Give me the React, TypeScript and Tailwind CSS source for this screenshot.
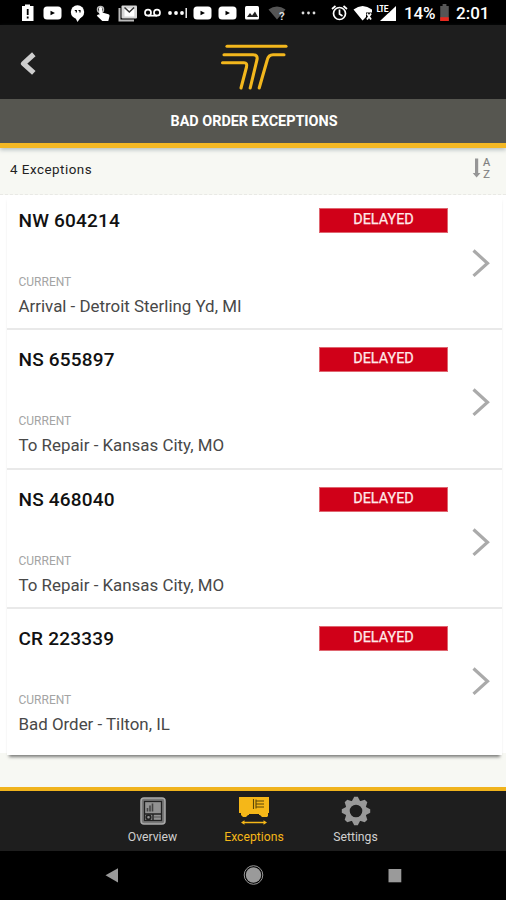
import React from "react";

type Item = { id: string; status: string; current: string; row: string };

const items: Item[] = [
  { id: "NW 604214", status: "DELAYED", current: "Arrival - Detroit Sterling Yd, MI", row: "h-[135px] pt-[13px]" },
  { id: "NS 655897", status: "DELAYED", current: "To Repair - Kansas City, MO", row: "h-[140px] pt-[17px]" },
  { id: "NS 468040", status: "DELAYED", current: "To Repair - Kansas City, MO", row: "h-[139px] pt-[17px]" },
  { id: "CR 223339", status: "DELAYED", current: "Bad Order - Tilton, IL", row: "h-[146px] pt-[17px]" },
];

function YoutubeGlyph({ x }: { x: number }) {
  return (
    <g transform={`translate(${x} 6.5)`}>
      <rect width="18" height="13" rx="3.5" fill="#fff" />
      <path d="M7 4.2 11.500 6.5 7 8.8Z" fill="#000" />
    </g>
  );
}

function StatusBar() {
  return (
    <div className="flex h-[25px] items-center bg-black text-white">
      <svg width="404" height="25" viewBox="0 0 404 25" className="shrink-0">
        <path d="M22 6h3V4.500h5V6h3.500v15H22Z" fill="#fff" />
        <path d="M27.700 9v6M27.700 16.500v2" stroke="#000" strokeWidth="1.800" />
        <YoutubeGlyph x={43.500} />
        <circle cx="77.500" cy="12" r="6.700" fill="#fff" />
        <path d="M75 17h6l-3.500 5Z" fill="#fff" />
        <path d="M74.800 10.500h1.500v2M78.500 10.500h1.500v2" stroke="#000" strokeWidth="1.200" fill="none" />
        <circle cx="100.500" cy="9.500" r="3" fill="none" stroke="#bbb" strokeWidth="1.500" />
        <path d="M99 8q1.500-2 3.200 0v4.500l6.300 1.700q1.500.5 1 2l-1.200 4.800h-6l-5.500-5.200 1.500-1.500 1 1Z" fill="#fff" />
        <path d="M119.500 8v12.500H134" stroke="#bbb" strokeWidth="2" fill="none" />
        <rect x="121.500" y="5.500" width="15.500" height="13" rx="1" fill="#d6d6d6" />
        <path d="M124.500 8.500h9.800v8h-9.800Z" fill="#fff" />
        <path d="M124.500 7.500l4.800 4.500 4.800-4.500" fill="none" stroke="#333" strokeWidth="1.500" />
        <g fill="none" stroke="#fff" strokeWidth="1.700">
          <circle cx="148" cy="12.700" r="3" />
          <circle cx="157" cy="12.700" r="3" />
          <path d="M148 15.700h9" />
        </g>
        <g fill="#fff">
          <circle cx="170" cy="13" r="1.900" />
          <circle cx="176" cy="13" r="1.900" />
          <circle cx="182" cy="13" r="1.900" />
          <rect x="185.500" y="8" width="1.400" height="10" />
        </g>
        <YoutubeGlyph x={193.500} />
        <YoutubeGlyph x={218.500} />
        <rect x="245" y="6" width="14" height="13.500" rx="1.500" fill="#fff" />
        <path d="m247 17 3-4 2 2.500 3-4 3 5.500Z" fill="#222" />
        <path d="M268.500 9.500q8.500-6 17 0L277 19.500Z" fill="#555" />
        <text x="279" y="20" fontFamily="Roboto, sans-serif" fontSize="11.500" fontWeight="700" fill="#ddd">?</text>
        <g fill="#ddd">
          <circle cx="303" cy="13" r="1.400" />
          <circle cx="308.500" cy="13" r="1.400" />
          <circle cx="314" cy="13" r="1.400" />
        </g>
        <g fill="none" stroke="#fff" strokeWidth="1.700">
          <circle cx="339.500" cy="13.500" r="6" />
          <path d="M339.500 9.500v4.500l3 2M332 9l3.500-3M347 9l-3.500-3" />
        </g>
        <path d="M353.500 9.500q9-7 18.500 0v3h-6V17l-3.500 3.500Z" fill="#fff" />
        <path d="m367 13.500 4 6m0-6-4 6" stroke="#fff" strokeWidth="1.800" />
        <path d="M396 6v15h-16Z" fill="#fff" />
        <text x="376.500" y="12.200" fontFamily="Roboto, sans-serif" fontSize="8.500" fontWeight="700" fill="#fff" stroke="#000" strokeWidth="1.500" paintOrder="stroke" textLength="12">LTE</text>
      </svg>
      <span className="w-[36px] pt-[2px] text-[17px] leading-[25px] font-medium tracking-[-0.1px]">14%</span>
      <svg width="9" height="17" viewBox="0 0 9 18" className="shrink-0">
        <path d="M0 2h2.500V0h4v2H9v16H0Z" fill="#555" />
        <path d="M0 14h9v4H0Z" fill="#e8281e" />
      </svg>
      <span className="ml-[7px] pt-[2px] text-[17px] leading-[25px] font-medium">2:01</span>
    </div>
  );
}

function Header() {
  return (
    <header className="relative z-10 shadow-[0_2px_4px_rgba(90,110,120,0.4)]">
      <div className="flex h-[74px] items-start bg-[#1e1e1e]">
        <svg width="50" height="74" viewBox="0 0 50 74" fill="none">
          <path d="m33.800 29.300-10.300 9.300 10.300 9.300" stroke="#cecece" strokeWidth="5.200" strokeLinejoin="round" />
        </svg>
        <svg width="80" height="74" viewBox="215 25 80 74" className="ml-[165px]" fill="none">
          <g stroke="#f3b71d" strokeWidth="3.100" strokeLinecap="round" strokeLinejoin="round">
            <path d="M227 46.300h59" />
            <path d="M224 54.700h29q5 0 4 5L250.200 88" />
            <path d="M222.500 62.700h21.500q3.500 0 2.500 4.300L241 88" />
            <path d="M284 54.700h-11q-4.500 0-5.700 5L259.200 88" />
          </g>
        </svg>
      </div>
      <h1 className="h-[44px] bg-[#565650] pt-[1px] pl-[2px] text-center text-[14.4px] leading-[44px] font-bold text-white">
        BAD ORDER EXCEPTIONS
      </h1>
      <div className="h-[5px] bg-[#f4b824]" />
    </header>
  );
}

function SortIcon() {
  return (
    <div className="flex h-[24px] w-[20px]">
      <svg width="10" height="24" viewBox="472 156 10 24">
        <path d="M475 158.500h3.200V173h2.300l-3.900 4.500-3.900-4.500h2.300Z" fill="#969696" />
      </svg>
      <div className="flex w-[9px] flex-col items-center pt-px text-[11px] leading-[12px] text-[#808080] [-webkit-text-stroke:0.2px_#808080]">
        <span>A</span>
        <span>Z</span>
      </div>
    </div>
  );
}

function ExceptionRow({ item, last }: { item: Item; last: boolean }) {
  return (
    <li className={`flex bg-white ${item.row} ${last ? "" : "border-b-2 border-[#e9e9e9]"}`}>
      <div className="w-[312px] pl-[11.500px]">
        <h2 className="h-[25px] text-[19px] leading-[25px] font-medium tracking-[0.2px] text-[#111]">{item.id}</h2>
        <p className="mt-[42px] text-[12px] leading-[15px] text-[#a4a4a4]">CURRENT</p>
        <p className="mt-[6px] text-[16.9px] leading-[21px] whitespace-nowrap text-[#484848]">{item.current}</p>
      </div>
      <div className="h-[25px] w-[129px] border border-[#df6670] bg-[#d00018] text-center text-[14.400px] leading-[22px] text-[#ffe9e9] [-webkit-text-stroke:0.25px_#ffe9e9]">
        {item.status}
      </div>
      <svg width="20" height="30" viewBox="0 0 20 30" className="mt-[40px] ml-[23px]" fill="none">
        <path d="m2.500 2.500 14 12.700-14 12.700" stroke="#aaa" strokeWidth="3.200" />
      </svg>
    </li>
  );
}

function OverviewIcon() {
  return (
    <svg width="26" height="28" viewBox="0 0 26 28">
      <rect x="1" y="1" width="24" height="26" rx="3" fill="#777" stroke="#aaa" strokeWidth="1.500" />
      <rect x="4.500" y="4.500" width="17" height="19" fill="#929292" stroke="#222" strokeWidth="1.300" />
      <path d="M5 17h16M13 17v7" stroke="#222" strokeWidth="1.400" />
      <path d="M7.500 14.500v-3.500M10 14.500V8.500M12.500 14.500V6.500" stroke="#444" strokeWidth="1.600" />
      <path d="M14 20h7" stroke="#555" strokeWidth="1" />
      <circle cx="8.500" cy="20.300" r="2.200" fill="#999" stroke="#222" strokeWidth="1.800" />
    </svg>
  );
}

function RailcarIcon() {
  return (
    <svg width="32" height="30" viewBox="0 0 32 30" fill="#f5b718">
      <path d="M1 1h30v16h-1v3l-1 1h-5l-2-2h-1v-1H11v1h-1l-2 2H5l-2-2v-2H1Z" />
      <path d="M15.500 3v10M18 5h8M18 8h8M18 11h8M18 3.500v9" stroke="#5b4708" strokeWidth="1.100" />
      <path d="M5 26.500h22" stroke="#f5b718" strokeWidth="1.500" />
      <path d="m3 26.500 3.500-2.200v4.400ZM29 26.500l-3.500-2.200v4.400Z" />
    </svg>
  );
}

function GearIcon() {
  return (
    <svg width="30" height="30" viewBox="-15 -15 30 30">
      <g fill="#999">
        {[0, 45, 90, 135, 180, 225, 270, 315].map((a) => (
          <path key={a} d="M-4.500-9-1.800-14.200h3.600L4.500-9Z" transform={`rotate(${a})`} />
        ))}
      </g>
      <circle r="8.500" fill="none" stroke="#999" strokeWidth="4.400" />
    </svg>
  );
}

function TabBar() {
  return (
    <nav className="border-t-4 border-[#f0b31c] bg-[#1e1e1e]">
      <div className="flex h-[60px] justify-center pl-[2px] text-[12.2px] leading-[16px] text-[#d0d0d0]">
        <div className="flex w-[101px] flex-col items-center pt-[6px]">
          <OverviewIcon />
          <span className="mt-[4px]">Overview</span>
        </div>
        <div className="flex w-[102px] flex-col items-center pt-[5px] text-[#f5b718]">
          <RailcarIcon />
          <span className="mt-[3px]">Exceptions</span>
        </div>
        <div className="flex w-[101px] flex-col items-center pt-[5px]">
          <GearIcon />
          <span className="mt-[3px]">Settings</span>
        </div>
      </div>
    </nav>
  );
}

function SystemNav() {
  return (
    <div className="flex h-[49px] items-start justify-center bg-black pl-[2px]">
      <svg width="300" height="49" viewBox="104 851 300 49" fill="#9a9a9a">
        <path d="M105.500 875.300 118 868.300v14.200Z" />
        <circle cx="253.500" cy="875" r="7.700" />
        <circle cx="253.500" cy="875" r="9.300" fill="none" stroke="#999" strokeWidth="1" />
        <rect x="388.500" y="869" width="12.800" height="13.300" />
      </svg>
    </div>
  );
}

export default function App() {
  return (
    <div className="flex h-[900px] w-[506px] flex-col overflow-hidden bg-[#f7f8f3] font-['Roboto',sans-serif]">
      <StatusBar />
      <Header />
      <section className="flex h-[47px] items-start justify-between border-b border-dashed border-[#e9e9e5] pr-[14px] pl-[10px]">
        <span className="pt-[12px] text-[13.4px] leading-[20px] tracking-[0.5px] text-[#222]">4 Exceptions</span>
        <div className="pt-[8px]">
          <SortIcon />
        </div>
      </section>
      <main className="h-[592px] bg-[linear-gradient(#fff_0_558px,transparent_558px)]">
        <ul className="mr-[4px] ml-[7px] h-[560px] shadow-[0_4px_3px_-2px_rgba(0,0,0,0.5)]">
          {items.map((item, i) => (
            <ExceptionRow key={item.id} item={item} last={i === items.length - 1} />
          ))}
        </ul>
      </main>
      <TabBar />
      <SystemNav />
    </div>
  );
}
